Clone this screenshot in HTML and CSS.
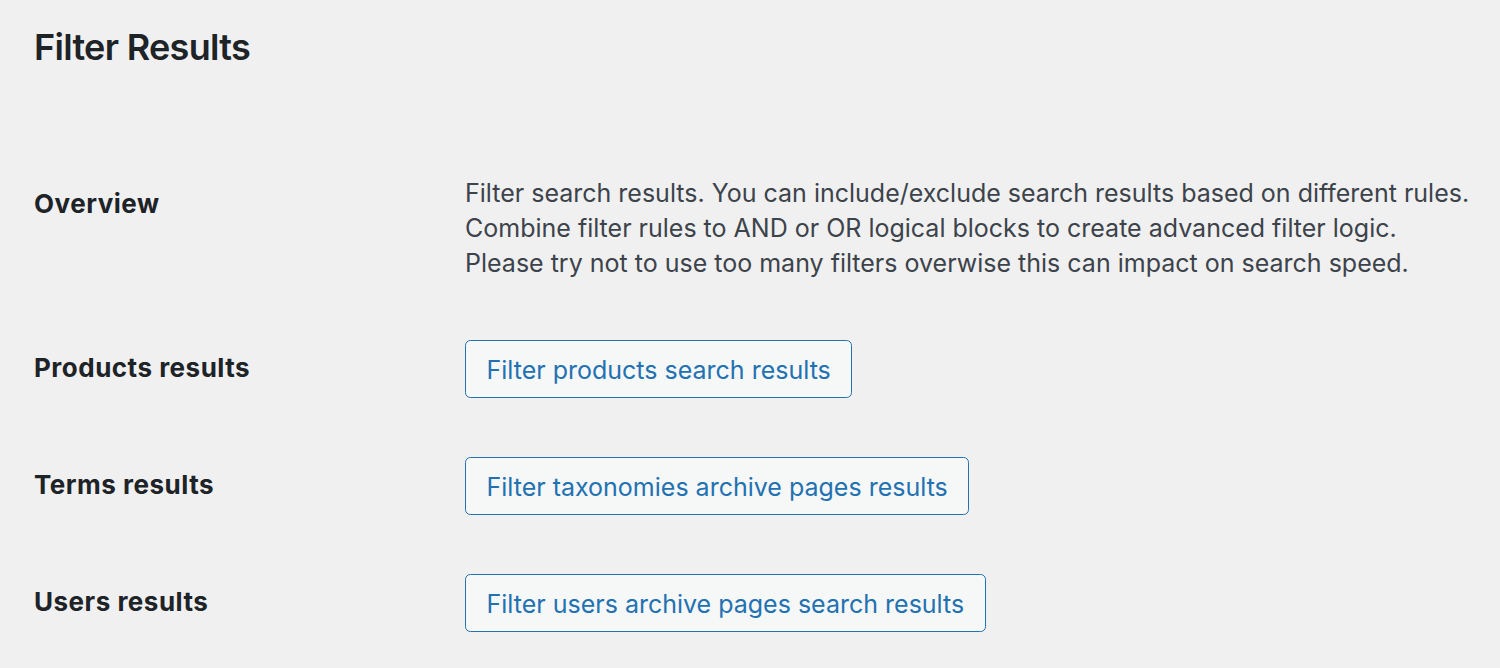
FILE: index.html
```html
<!DOCTYPE html>
<html lang="en">
<head>
<meta charset="utf-8">
<title>Filter Results</title>
<link rel="stylesheet" href="styles.css">
</head>
<body>
<div class="wrap">
  <h2 class="title">Filter Results</h2>
  <div class="form">
    <div class="row">
      <div class="label">Overview</div>
      <div class="field">
        <p class="desc">Filter search results. You can include/exclude search results based on different rules.<br>Combine filter rules to AND or OR logical blocks to create advanced filter logic.<br>Please try not to use too many filters overwise this can impact on search speed.</p>
      </div>
    </div>
    <div class="row">
      <div class="label">Products results</div>
      <div class="field"><button class="button" type="button">Filter products search results</button></div>
    </div>
    <div class="row">
      <div class="label">Terms results</div>
      <div class="field"><button class="button" type="button">Filter taxonomies archive pages results</button></div>
    </div>
    <div class="row">
      <div class="label">Users results</div>
      <div class="field"><button class="button" type="button">Filter users archive pages search results</button></div>
    </div>
  </div>
</div>
</body>
</html>
```
FILE: styles.css
```css
html, body {
  margin: 0;
  padding: 0;
  background: #f0f0f1;
}
body {
  font-family: "Inter", "Liberation Sans", sans-serif;
  color: #1d2327;
  height: 668px;
  overflow: hidden;
}
.wrap {
  padding-left: 34px;
}
.title {
  margin: 22px 0 0;
  font-size: 36px;
  line-height: 50px;
  font-weight: 600;
  color: #1d2327;
  letter-spacing: -0.7px;
}
.form {
  margin-top: 74px;
  display: flex;
  flex-direction: column;
}
.row {
  display: grid;
  grid-template-columns: 431px 1fr;
  align-items: start;
}
.label {
  padding-top: 42px;
  font-size: 26px;
  line-height: 32.8px;
  font-weight: 700;
  letter-spacing: 0.5px;
  color: #1d2327;
}
.field {
  padding: 29.5px 0;
}
.desc {
  margin: 0;
  font-size: 25px;
  line-height: 35px;
  color: #3c434a;
}
.button {
  box-sizing: border-box;
  height: 58px;
  margin: 0;
  padding: 4px 20.5px 0;
  line-height: 50.4px;
  font-family: inherit;
  font-size: 25px;
  color: #2271b1;
  background: #f6f7f7;
  border: 1.8px solid #2271b1;
  border-radius: 5.4px;
  cursor: pointer;
  white-space: nowrap;
}
```
